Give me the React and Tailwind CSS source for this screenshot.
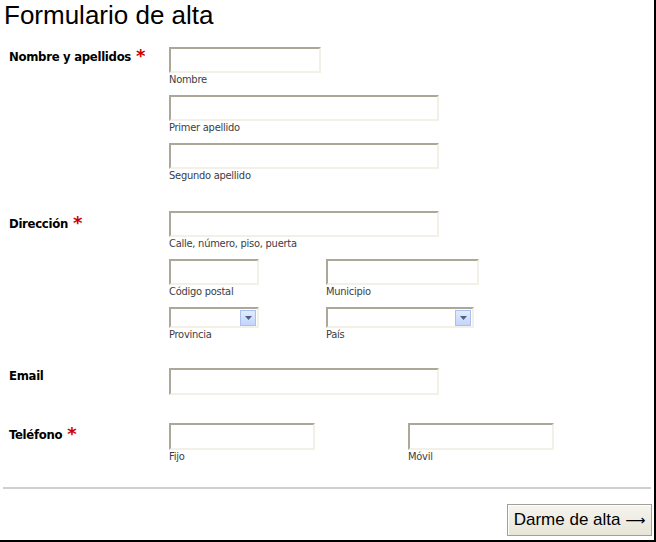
import React from "react";

const inputBorder =
  "block border-2 border-t-[#aca899] border-l-[#aca899] border-b-[#f3f1e7] border-r-[#f3f1e7] bg-white outline-none";

function Caption({ children }) {
  return (
    <div className="font-['DejaVu_Sans_Condensed','DejaVu_Sans',sans-serif] text-[11px] leading-[13px] tracking-[-0.25px] text-[#3c3c46]">
      {children}
    </div>
  );
}

function Field({ width, height = "h-[26px]", caption }) {
  return (
    <div>
      <input type="text" className={`${inputBorder} ${width} ${height}`} />
      {caption ? <Caption>{caption}</Caption> : null}
    </div>
  );
}

function SelectField({ width, caption }) {
  return (
    <div>
      <div className={`${inputBorder} ${width} h-[21px] flex items-center justify-end pr-[1px]`}>
        <span className="flex h-[16px] w-[16px] items-center justify-center border border-[#aac0f0] bg-[linear-gradient(#e3ebfe,#c3d5fb)]">
          <svg width="7" height="4" viewBox="0 0 7 4">
            <path d="M0 0h7L3.5 4z" fill="#4d6185" />
          </svg>
        </span>
      </div>
      <Caption>{caption}</Caption>
    </div>
  );
}

function Label({ children, required, pad }) {
  return (
    <div
      className={`w-[169px] shrink-0 pl-[9px] ${pad} font-['DejaVu_Sans_Condensed','DejaVu_Sans',sans-serif] text-[13px] font-bold leading-[16px] tracking-[-0.3px] text-black`}
    >
      {children}
      {required ? (
        <span className="relative top-[1px] ml-[5px] font-['DejaVu_Sans',sans-serif] text-[18px] leading-[0] tracking-normal text-[#cc0000]">
          *
        </span>
      ) : null}
    </div>
  );
}

export default function App() {
  return (
    <div className="box-border h-[542px] w-[656px] border-b-2 border-r-2 border-black bg-white font-['Liberation_Sans',Arial,sans-serif]">
      <h1 className="pl-[4px] text-[26px] font-normal leading-[30px] text-black">
        Formulario de alta
      </h1>

      <div className="mt-[17px] flex">
        <Label required pad="pt-[2px]">
          Nombre y apellidos
        </Label>
        <div className="flex flex-col gap-[9px]">
          <Field width="w-[152px]" caption="Nombre" />
          <Field width="w-[270px]" caption="Primer apellido" />
          <Field width="w-[270px]" caption="Segundo apellido" />
        </div>
      </div>

      <div className="mt-[29px] flex">
        <Label required pad="pt-[5px]">
          Dirección
        </Label>
        <div className="flex flex-col gap-[9px]">
          <Field width="w-[270px]" caption="Calle, número, piso, puerta" />
          <div className="flex gap-[67px]">
            <Field width="w-[90px]" caption="Código postal" />
            <Field width="w-[153px]" caption="Municipio" />
          </div>
          <div className="flex gap-[67px]">
            <SelectField width="w-[90px]" caption="Provincia" />
            <SelectField width="w-[148px]" caption="País" />
          </div>
        </div>
      </div>

      <div className="mt-[27px] flex">
        <Label pad="pt-0">Email</Label>
        <Field width="w-[270px]" height="h-[27px]" />
      </div>

      <div className="mt-[28px] flex">
        <Label required pad="pt-[4px]">
          Teléfono
        </Label>
        <div className="flex gap-[93px]">
          <Field width="w-[146px]" height="h-[27px]" caption="Fijo" />
          <Field width="w-[146px]" height="h-[27px]" caption="Móvil" />
        </div>
      </div>

      <div className="mx-[3px] mt-[24px] h-[2px] bg-[#d0d0d0]" />

      <div className="mt-[15px] flex justify-end pr-[2px]">
        <button
          type="button"
          className="h-[32px] w-[145px] border border-[#a09f98] bg-[linear-gradient(#f5f4ee,#e8e5d8)] text-[17px] leading-[20px] text-black shadow-[inset_1px_1px_0_#ffffff]"
        >
          Darme de alta{" "}
          <span className="font-['DejaVu_Sans',sans-serif] text-[14px]">⟶</span>
        </button>
      </div>
    </div>
  );
}
